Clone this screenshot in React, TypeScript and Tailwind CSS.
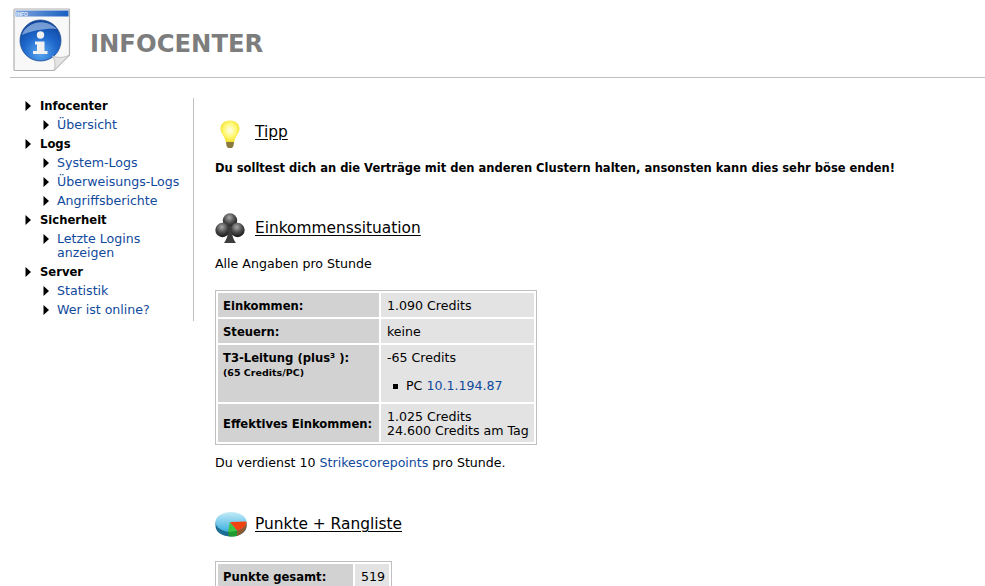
import React from "react";

const Arrow = () => (
  <svg width="6" height="10" viewBox="0 0 6 10" className="shrink-0">
    <path d="M0.5 0 L6 5 L0.5 10 Z" fill="#000" />
  </svg>
);

const nav = [
  { title: "Infocenter", links: ["Übersicht"] },
  { title: "Logs", links: ["System-Logs", "Überweisungs-Logs", "Angriffsberichte"] },
  { title: "Sicherheit", links: ["Letzte Logins anzeigen"] },
  { title: "Server", links: ["Statistik", "Wer ist online?"] },
];

const InfoIcon = () => (
  <svg width="58" height="64" viewBox="0 0 58 64">
    <defs>
      <radialGradient id="ball" cx="50%" cy="80%" r="75%">
        <stop offset="0" stopColor="#5aa8f0" />
        <stop offset="0.55" stopColor="#1f68cc" />
        <stop offset="1" stopColor="#0f47a0" />
      </radialGradient>
      <linearGradient id="bar" x1="0" x2="1" y1="0" y2="0">
        <stop offset="0" stopColor="#7ea4de" />
        <stop offset="1" stopColor="#1a5fc0" />
      </linearGradient>
    </defs>
    <path d="M1.5 1 Q1 1 1 2 V61.5 Q1 62.5 2 62.5 H41 L56.5 47 V2 Q56.5 1 55.5 1 Z" fill="#f8f8f8" stroke="#b0b0b0" strokeWidth="1.2" />
    <rect x="2.5" y="2.5" width="53" height="6" fill="url(#bar)" />
    <text x="3" y="7.5" fontSize="5" fontWeight="bold" fill="#e8eefa" fontFamily="'Liberation Sans', sans-serif">INFO</text>
    <circle cx="27.5" cy="32.5" r="20.5" fill="url(#ball)" stroke="#1a4a90" strokeWidth="0.8" />
    <path d="M9 27 C12 16 30 8 44 21 C34 20 20 22 9 27 Z" fill="#c4daf6" opacity="0.55" />
    <circle cx="27.5" cy="27" r="3.7" fill="#f2f2f2" />
    <path d="M22 33.5 H31.5 V43 H34.5 V46 H20 V43 H24 V36.5 H22 Z" fill="#f2f2f2" />
    <path d="M41 62.5 C43 58 42 52 39.5 48 C45 50 51 50 56.5 47 Z" fill="#e4e4e4" stroke="#b8b8b8" strokeWidth="0.8" />
  </svg>
);

const BulbIcon = () => (
  <svg width="20" height="28" viewBox="0 0 20 28">
    <defs>
      <radialGradient id="bulb" cx="50%" cy="45%" r="60%">
        <stop offset="0" stopColor="#fffef0" />
        <stop offset="0.55" stopColor="#fff870" />
        <stop offset="1" stopColor="#ecd820" />
      </radialGradient>
    </defs>
    <path d="M10 0.5 C4 0.5 0.5 4 0.5 9 C0.5 13 4.5 16 6 22 H14 C15.5 16 19.5 13 19.5 9 C19.5 4 16 0.5 10 0.5 Z" fill="url(#bulb)" />
    <path d="M6 22 H14 L13.5 26 L12 28 H8 L6.5 26 Z" fill="#8a7a40" />
  </svg>
);

const ClubIcon = () => (
  <svg width="30" height="32" viewBox="0 0 30 32">
    <defs>
      <radialGradient id="club" cx="45%" cy="30%" r="70%">
        <stop offset="0" stopColor="#a8a8a8" />
        <stop offset="0.55" stopColor="#4a4a4a" />
        <stop offset="1" stopColor="#161616" />
      </radialGradient>
    </defs>
    <circle cx="15" cy="8.5" r="7.2" fill="url(#club)" />
    <circle cx="7.5" cy="18" r="7.2" fill="url(#club)" />
    <circle cx="22.5" cy="18" r="7.2" fill="url(#club)" />
    <path d="M13.5 14 H16.5 C16.5 22 18 27 21 31 H9 C12 27 13.5 22 13.5 14 Z" fill="#3c3c3c" />
  </svg>
);

const PieIcon = () => (
  <svg width="32" height="26" viewBox="0 0 32 26">
    <defs>
      <linearGradient id="pieTop" x1="0" x2="0" y1="0" y2="1">
        <stop offset="0" stopColor="#c4ecf8" />
        <stop offset="1" stopColor="#3aaee0" />
      </linearGradient>
    </defs>
    <path d="M0.5 11 V15 C0.5 21 7 25.5 16 25.5 C25 25.5 31.5 21 31.5 15 V11 Z" fill="#1c6c94" />
    <ellipse cx="16" cy="11" rx="15.5" ry="10" fill="url(#pieTop)" />
    <path d="M13 20.7 L22 19.6 V25 C19 25.6 16 25.7 14 25.4 Z" fill="#1f9a30" />
    <path d="M15 11 L22 19.6 C19 20.6 16 21 13 20.7 Z" fill="#3cc444" />
    <path d="M22 19.6 C27 18 31 15 31.5 11 V15 C31.5 19 27 23.5 22 25 Z" fill="#8e5a30" />
    <path d="M15 11 L31.5 10.5 C31.5 15 27 18 22 19.6 Z" fill="#f2420f" />
  </svg>
);

const Heading = ({ icon, title }: { icon: React.ReactNode; title: string }) => (
  <div className="flex items-center h-8">
    <div className="w-10 flex justify-start">{icon}</div>
    <h2 className="mt-[2px] text-[15.4px] underline underline-offset-2 leading-none text-black">{title}</h2>
  </div>
);

const thClass = "bg-[#d2d2d2] px-[5px] pt-[1px] text-[11.6px] font-bold align-middle text-left";
const tdClass = "bg-[#e3e3e3] pl-[6px] pr-[4px] pt-[1px] align-middle";

export default function App() {
  return (
    <div className="h-[586px] overflow-hidden bg-white text-black text-[12.6px] leading-[14px] font-['DejaVu_Sans','Verdana',sans-serif]">
      {/* header */}
      <div className="ml-[10px] h-[78px] border-b border-[#c0c0c0] flex items-start">
        <div className="ml-[3px] mt-2 w-[77px]">
          <InfoIcon />
        </div>
        <h1 className="mt-[29px] text-[24.3px] leading-[30px] font-bold text-[#7d7d7d]">INFOCENTER</h1>
      </div>

      <div className="flex items-start pt-5">
        {/* sidebar */}
        <div className="w-[184px] ml-[10px] border-r border-[#c0c0c0] pl-[15px] pr-[8px] pb-[2px] shrink-0">
          <div className="-mt-[2px]">
            {nav.map((group) => (
              <div key={group.title}>
                <div className="flex items-center h-[19px] gap-[9px]">
                  <Arrow />
                  <span className="font-bold text-[11.6px]">{group.title}</span>
                </div>
                {group.links.map((link) => (
                  <div key={link} className="flex items-start ml-[18px] gap-[8px] py-[2.5px]">
                    <div className="pt-[2px]">
                      <Arrow />
                    </div>
                    <a className="text-[#114a9c]">{link}</a>
                  </div>
                ))}
              </div>
            ))}
          </div>
        </div>

        {/* main */}
        <div className="ml-[21px] flex-1">
          <div className="mt-[18px]">
            <Heading
              icon={
                <div className="ml-[5px] mt-[3px]">
                  <BulbIcon />
                </div>
              }
              title="Tipp"
            />
          </div>
          <p className="mt-[13px] font-bold text-[11.5px]">
            Du solltest dich an die Verträge mit den anderen Clustern halten, ansonsten kann dies sehr böse enden!
          </p>

          <div className="mt-[37px]">
            <Heading icon={<ClubIcon />} title="Einkommenssituation" />
          </div>
          <p className="mt-[13px]">Alle Angaben pro Stunde</p>

          <table className="mt-[19px] border border-[#c0c0c0] border-separate border-spacing-[2px]">
            <tbody>
              <tr className="h-6">
                <th className={`${thClass} w-[161px]`}>Einkommen:</th>
                <td className={`${tdClass} w-[153px]`}>1.090 Credits</td>
              </tr>
              <tr className="h-6">
                <th className={thClass}>Steuern:</th>
                <td className={tdClass}>keine</td>
              </tr>
              <tr className="h-[57px]">
                <th className={`${thClass} !align-top !pt-[6px]`}>
                  T3-Leitung (plus³ ):
                  <div className="text-[9.5px] leading-[15px]">(65 Credits/PC)</div>
                </th>
                <td className={`${tdClass} !align-top !pt-[6px]`}>
                  -65 Credits
                  <div className="flex items-center mt-[14px] ml-[6px] gap-[8px]">
                    <span className="w-[5px] h-[5px] bg-black" />
                    <span>
                      PC <a className="text-[#114a9c]">10.1.194.87</a>
                    </span>
                  </div>
                </td>
              </tr>
              <tr className="h-[38px]">
                <th className={thClass}>Effektives Einkommen:</th>
                <td className={tdClass}>
                  1.025 Credits
                  <br />
                  24.600 Credits am Tag
                </td>
              </tr>
            </tbody>
          </table>

          <p className="mt-[11px]">
            Du verdienst 10 <a className="text-[#114a9c]">Strikescorepoints</a> pro Stunde.
          </p>

          <div className="mt-[38px]">
            <Heading icon={<PieIcon />} title="Punkte + Rangliste" />
          </div>

          <table className="mt-[21px] border border-[#c0c0c0] border-separate border-spacing-[2px]">
            <tbody>
              <tr className="h-6">
                <th className={`${thClass} w-[135px]`}>Punkte gesamt:</th>
                <td className={tdClass}>519</td>
              </tr>
            </tbody>
          </table>
        </div>
      </div>
    </div>
  );
}
